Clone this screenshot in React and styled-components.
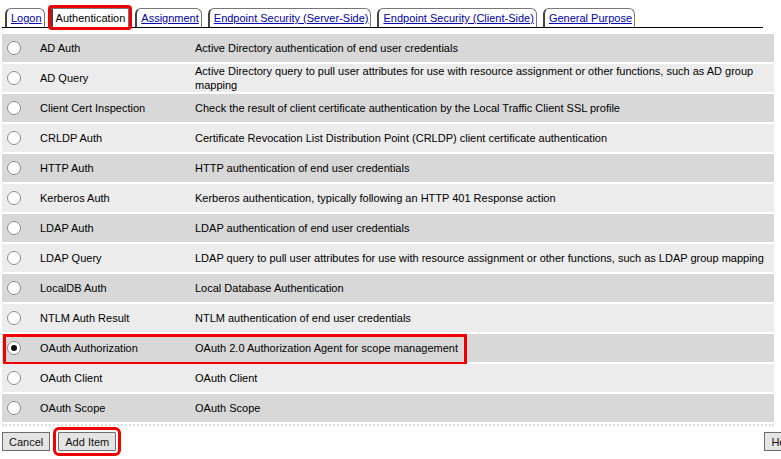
import styled, { createGlobalStyle, css } from "styled-components";

const GlobalStyle = createGlobalStyle`
  body {
    margin: 0;
    background: #fff;
    font-family: "Liberation Sans", Tahoma, sans-serif;
    font-size: 11px;
    color: #000;
    overflow: hidden;
  }
`;

const Page = styled.div`
  width: 781px;
  height: 459px;
  padding: 8px 0 0 2px;
  box-sizing: border-box;
`;

const highlight = css`
  outline: 3px solid #f00000;
  outline-offset: 1px;
  border-radius: 1px;
`;

const TabStrip = styled.div`
  display: flex;
  align-items: flex-end;
  gap: 6px;
  padding-left: 3px;
  width: 758px;
  border-bottom: 1px solid #000;
  height: 19px;
`;

const Tab = styled.a`
  display: block;
  height: 18px;
  line-height: 19px;
  padding: 0 2px 0 4px;
  border: 1px solid #777;
  border-left: 2px solid #444;
  border-bottom: none;
  border-radius: 6px 6px 0 0;
  background: #fff;
  color: ${(p) => (p.$active ? "#000" : "#0000b0")};
  text-decoration: ${(p) => (p.$active ? "none" : "underline")};
  white-space: nowrap;
  ${(p) => p.$active && highlight}
  ${(p) => p.$active && "outline-offset: 0px; padding: 0 3px;"}
`;

const Table = styled.div`
  margin-top: 6px;
  width: 772px;
  display: flex;
  flex-direction: column;
  border-bottom: 2px dotted #ddd;
`;

const Row = styled.div`
  display: grid;
  grid-template-columns: 38px 155px 1fr;
  align-items: center;
  height: 28px;
  margin-bottom: 2px;
  background: ${(p) => (p.$odd ? "#d8d8d8" : "#ececec")};
  position: relative;
`;

const RowMark = styled.div`
  position: absolute;
  left: 1px;
  top: 0px;
  width: 458px;
  height: 25px;
  border: 3px solid #f00000;
  border-radius: 1px;
  pointer-events: none;
`;

const Radio = styled.span`
  display: block;
  width: 12px;
  height: 12px;
  margin-left: 5px;
  border-radius: 50%;
  border: 1px solid #8a8a8a;
  background: #fff;
  position: relative;
  ${(p) =>
    p.$checked &&
    css`
      &::after {
        content: "";
        position: absolute;
        left: 3px;
        top: 3px;
        width: 6px;
        height: 6px;
        border-radius: 50%;
        background: #111;
      }
    `}
`;

const Name = styled.div`
  white-space: nowrap;
`;

const Desc = styled.div`
  line-height: 14px;
  padding-right: 0;
`;

const Footer = styled.div`
  display: flex;
  align-items: center;
  margin-top: 6px;
`;

const Button = styled.button`
  font: inherit;
  color: #111;
  height: 19px;
  padding: 0 6px;
  margin-right: ${(p) => p.$gap || 0}px;
  background: #e4e4e4;
  border: 1px solid #6e6e6e;
  border-radius: 0;
  ${(p) => p.$marked && highlight}
  ${(p) => p.$marked && "outline-offset: 2px;"}
`;

const Spacer = styled.div`
  flex: 1;
`;

const HelpButton = styled(Button)`
  margin-right: -20px;
`;

const tabs = [
  "Logon",
  "Authentication",
  "Assignment",
  "Endpoint Security (Server-Side)",
  "Endpoint Security (Client-Side)",
  "General Purpose",
];

const items = [
  ["AD Auth", "Active Directory authentication of end user credentials"],
  [
    "AD Query",
    "Active Directory query to pull user attributes for use with resource assignment or other functions, such as AD group mapping",
  ],
  [
    "Client Cert Inspection",
    "Check the result of client certificate authentication by the Local Traffic Client SSL profile",
  ],
  [
    "CRLDP Auth",
    "Certificate Revocation List Distribution Point (CRLDP) client certificate authentication",
  ],
  ["HTTP Auth", "HTTP authentication of end user credentials"],
  ["Kerberos Auth", "Kerberos authentication, typically following an HTTP 401 Response action"],
  ["LDAP Auth", "LDAP authentication of end user credentials"],
  [
    "LDAP Query",
    "LDAP query to pull user attributes for use with resource assignment or other functions, such as LDAP group mapping",
  ],
  ["LocalDB Auth", "Local Database Authentication"],
  ["NTLM Auth Result", "NTLM authentication of end user credentials"],
  ["OAuth Authorization", "OAuth 2.0 Authorization Agent for scope management"],
  ["OAuth Client", "OAuth Client"],
  ["OAuth Scope", "OAuth Scope"],
];

const SELECTED = "OAuth Authorization";

export default function App() {
  return (
    <Page>
      <GlobalStyle />
      <TabStrip>
        {tabs.map((t) => (
          <Tab key={t} $active={t === "Authentication"}>
            {t}
          </Tab>
        ))}
      </TabStrip>
      <Table>
        {items.map(([name, desc], i) => (
          <Row key={name} $odd={i % 2 === 0}>
            <Radio $checked={name === SELECTED} />
            <Name>{name}</Name>
            <Desc>{desc}</Desc>
            {name === SELECTED && <RowMark />}
          </Row>
        ))}
      </Table>
      <Footer>
        <Button $gap={8}>Cancel</Button>
        <Button $marked>Add Item</Button>
        <Spacer />
        <HelpButton>Help</HelpButton>
      </Footer>
    </Page>
  );
}
